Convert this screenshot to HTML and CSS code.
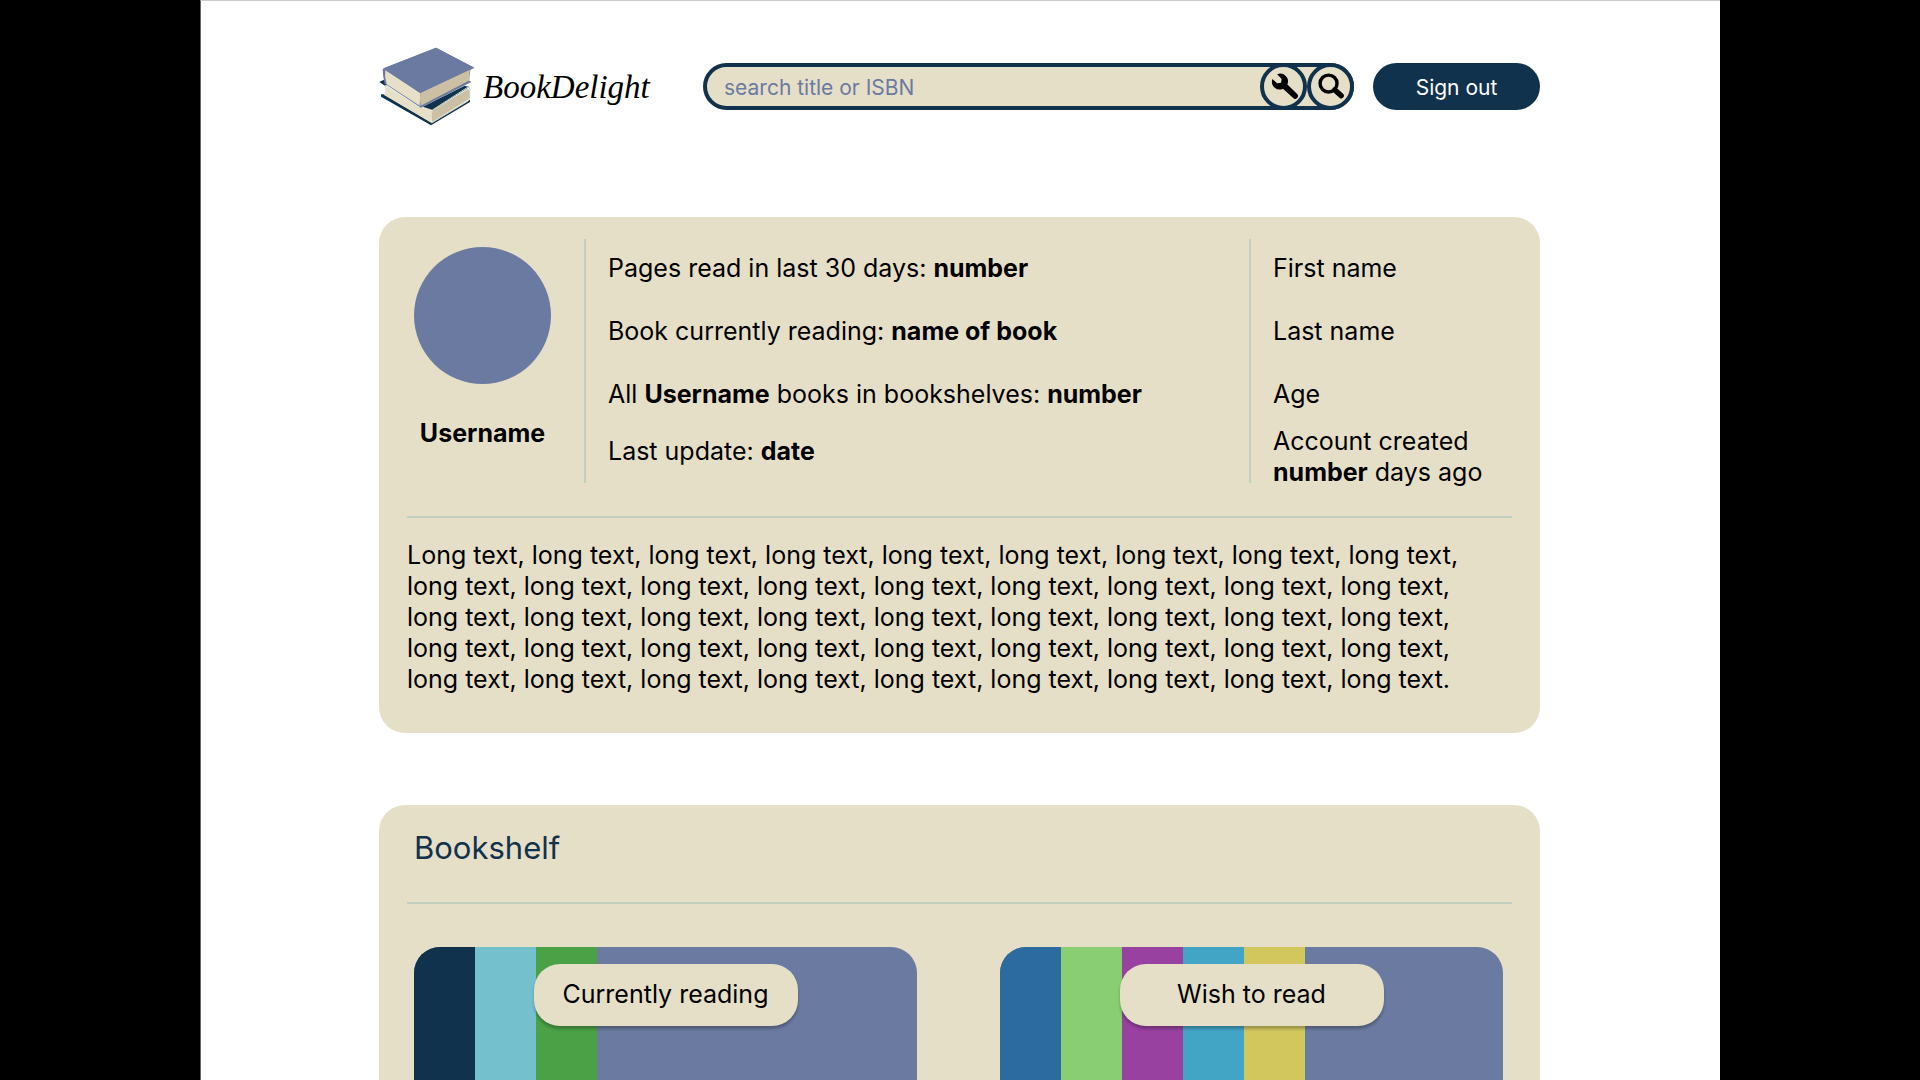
FILE: index.html
```html
<!DOCTYPE html>
<html lang="en">
<head>
<meta charset="utf-8">
<title>BookDelight</title>
<link rel="stylesheet" href="styles.css">
</head>
<body>
<div class="page">
  <header class="header">
    <a class="brand" href="#">
      <svg class="brand-logo" viewBox="30 34 286 237" aria-hidden="true">
        <path fill="#11324d" d="M30 139l12-6 20 8-14 10z"/>
        <path fill="#11324d" d="M35 176h8l144 85 115-69v7l-117 70L35 183z"/>
        <path fill="#e7e0c9" d="M46 147l100 64 44 12q-6 18-3 39L43 177q8-14 3-30z"/>
        <path fill="#11324d" d="M160 213l126-63 14 4-110 69z"/>
        <path fill="#cbc0a3" d="M190 224l107-65q6 14 1 32l-110 68q-4-18 2-35z"/>
        <path fill="none" stroke="#c1cfc0" stroke-width="3" d="M189 223l104-67q8-4 8 6v22q0 10-8 14l-106 64"/>
        <path fill="#6b7aa1" d="M40 100l160-64 115 60-12 6-4 32 7 5-151 77-109-72q-6-24-6-44z"/>
        <path fill="#e7e0c9" d="M48 104l105 68-2 38-99-64q-7-20-4-42z"/>
        <path fill="#cbc0a3" d="M153 172l149-72q-5 16-1 34l-147 76q-4-18-1-38z"/>
        <path fill="#6b7aa1" d="M42 98L200 36l115 60-163 76z"/>
      </svg>
      <span class="brand-name">BookDelight</span>
    </a>
    <form class="search" role="search">
      <input class="search-input" type="search" placeholder="search title or ISBN" aria-label="Search title or ISBN">
      <button class="search-button" type="button" aria-label="Search settings">
        <svg viewBox="0 0 40 40" aria-hidden="true"><path d="M13.500 7.500A8 8 0 0 1 24 18L34 27.800a2.900 2.900 0 0 1-4.100 4.100L19.500 22.300A8 8 0 0 1 8.600 12.300l4.900 4.300 4-.4.600-4z"/></svg>
      </button>
      <button class="search-button" type="submit" aria-label="Search">
        <svg viewBox="0 0 40 40" aria-hidden="true"><circle cx="18" cy="17" r="8.700" fill="none" stroke="#000" stroke-width="3.500"/><path d="M24.500 23.500l6.500 6" stroke="#000" stroke-width="5.500" stroke-linecap="round"/></svg>
      </button>
    </form>
    <button class="sign-out" type="button">Sign out</button>
  </header>
  <main class="content">
    <section class="card">
      <div class="profile">
        <div class="identity">
          <div class="avatar"></div>
          <strong>Username</strong>
        </div>
        <ul class="facts stats">
          <li>Pages read in last 30 days: <strong>number</strong></li>
          <li>Book currently reading: <strong>name of book</strong></li>
          <li>All <strong>Username</strong> books in bookshelves: <strong>number</strong></li>
          <li>Last update: <strong>date</strong></li>
        </ul>
        <ul class="facts details">
          <li>First name</li>
          <li>Last name</li>
          <li>Age</li>
          <li>Account created <strong>number</strong> days ago</li>
        </ul>
      </div>
      <p class="about">Long text, long text, long text, long text, long text, long text, long text, long text, long text, long text, long text, long text, long text, long text, long text, long text, long text, long text, long text, long text, long text, long text, long text, long text, long text, long text, long text, long text, long text, long text, long text, long text, long text, long text, long text, long text, long text, long text, long text, long text, long text, long text, long text, long text, long text.</p>
    </section>
    <section class="card">
      <h2 class="card-title">Bookshelf</h2>
      <div class="shelves">
        <div class="shelf">
          <span class="spine navy"></span><span class="spine aqua"></span><span class="spine green"></span>
          <a class="shelf-label" href="#">Currently reading</a>
        </div>
        <div class="shelf">
          <span class="spine blue"></span><span class="spine lime"></span><span class="spine purple"></span><span class="spine sky"></span><span class="spine yellow"></span>
          <a class="shelf-label" href="#">Wish to read</a>
        </div>
      </div>
    </section>
  </main>
</div>
</body>
</html>
```
FILE: styles.css
```css
:root {
  --navy: #11324d;
  --slate: #6b7aa1;
  --sage: #c1cfc0;
  --sand: #e6dfc8;
}

* {
  box-sizing: border-box;
}

body {
  margin: 0;
  background: #000;
  color: #000;
  font: 400 25px/31px Inter, "Liberation Sans", sans-serif;
  font-optical-sizing: none;
}

strong {
  font-weight: 700;
}

.page {
  max-width: 1520px;
  min-height: 100vh;
  margin: 0 auto;
  padding: 0 180px 72px 178px;
  border-top: 1px solid #ccc;
  border-left: 1px solid #666;
  background: #fff;
}

.header {
  display: flex;
  align-items: center;
  padding: 46px 0 91px;
}

.brand {
  display: flex;
  align-items: center;
  gap: 8px;
  width: 324px;
  color: #000;
  font: italic 33px/40px "Liberation Serif", serif;
  text-decoration: none;
}

.brand-logo {
  width: 96px;
  height: 79px;
}

.search {
  display: flex;
  flex: 1;
  height: 47px;
  margin-right: 19px;
  border-radius: 24px;
  background: var(--sand);
  box-shadow: inset 0 0 0 4px var(--navy);
}

.search-input {
  flex: 1;
  min-width: 0;
  padding: 2px 21px 0;
  border: 0;
  background: none;
  color: var(--slate);
  font: 400 21px/26px Inter, "Liberation Sans", sans-serif;
  font-optical-sizing: none;
}

.search-input::placeholder {
  color: var(--slate);
  opacity: 1;
}

.search-button {
  width: 47px;
  height: 47px;
  padding: 0;
  border: 4px solid var(--navy);
  border-radius: 50%;
  background: var(--sand);
}

.search-button svg {
  display: block;
  width: 100%;
}

.sign-out {
  width: 167px;
  height: 47px;
  padding: 2px 0 0;
  border: 0;
  border-radius: 24px;
  background: var(--navy);
  color: #fff;
  font: 400 21px/26px Inter, "Liberation Sans", sans-serif;
  font-optical-sizing: none;
}

.content {
  display: grid;
  gap: 72px;
}

.card {
  padding: 22px 28px 38px;
  border-radius: 26px;
  background: var(--sand);
}

.profile {
  display: flex;
  padding-bottom: 33px;
  border-bottom: 2px solid var(--sage);
}

.identity {
  display: flex;
  flex-direction: column;
  align-items: center;
  gap: 34px;
  width: 177px;
  padding: 8px 26px 0 0;
}

.avatar {
  width: 137px;
  height: 137px;
  border-radius: 50%;
  background: var(--slate);
}

.facts {
  display: grid;
  align-content: start;
  gap: 32px;
  height: 244px;
  margin: 0;
  padding: 14px 0 0 22px;
  border-left: 2px solid var(--sage);
  list-style: none;
}

.stats {
  flex: 1;
}

.details {
  width: 263px;
}

.stats li:last-child {
  margin-top: -6px;
}

.details li:last-child {
  margin-top: -16px;
}

.about {
  margin: 22px 0 0;
  padding-right: 26px;
}

.card-title {
  margin: 0;
  padding: 2px 7px 35px;
  border-bottom: 2px solid var(--sage);
  color: var(--navy);
  font-size: 31px;
  font-weight: 400;
  line-height: 38px;
}

.shelves {
  display: grid;
  grid-template-columns: 1fr 1fr;
  gap: 83px;
  padding: 43px 9px 0 7px;
}

.shelf {
  position: relative;
  display: flex;
  height: 252px;
  overflow: hidden;
  border-radius: 26px;
  background: var(--slate);
}

.spine {
  width: 61px;
}

.navy { background: var(--navy); }
.aqua { background: #74c0cd; }
.green { background: #4aa146; }
.blue { background: #2b6b9f; }
.lime { background: #89ce72; }
.purple { background: #9841a0; }
.sky { background: #42a5c5; }
.yellow { background: #d1c75d; }

.shelf-label {
  position: absolute;
  top: 17px;
  left: 50%;
  width: 264px;
  margin-left: -132px;
  padding: 15px 0 16px;
  border-radius: 26px;
  background: var(--sand);
  box-shadow: 0 3px 3px rgba(0, 0, 0, 0.25);
  color: #000;
  text-align: center;
  text-decoration: none;
}
```
